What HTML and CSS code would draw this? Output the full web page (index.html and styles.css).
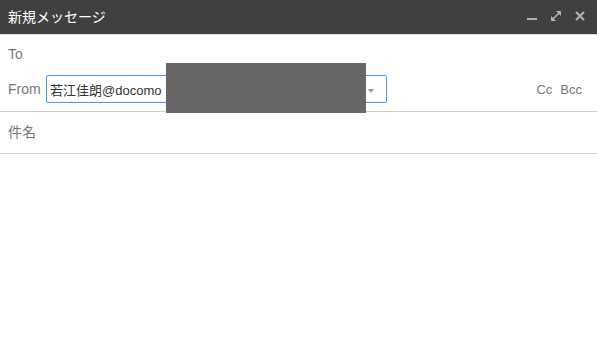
FILE: index.html
```html
<!DOCTYPE html>
<html lang="ja">
<head>
    <meta charset="UTF-8">
    <title>新規メッセージ</title>
    <link rel="stylesheet" href="styles.css">
</head>
<body>
    <div class="compose">
        <header class="compose-header">
            <h1 class="compose-title">新規メッセージ</h1>
            <div class="window-btns">
                <svg class="icon" width="12" height="12" viewBox="0 0 12 12">
                    <rect x="1" y="8" width="10" height="2" fill="currentColor"/>
                </svg>
                <svg class="icon" width="12" height="12" viewBox="0 0 12 12">
                    <path d="M3 9L9 3" stroke="currentColor" stroke-width="1.6"/>
                    <path d="M6 1H11V6Z" fill="currentColor"/>
                    <path d="M1 6V11H6Z" fill="currentColor"/>
                </svg>
                <svg class="icon" width="12" height="12" viewBox="0 0 12 12">
                    <path d="M2 2L10 10M10 2L2 10" stroke="currentColor" stroke-width="2"/>
                </svg>
            </div>
        </header>

        <div class="recipients">
            <div class="to-row">To</div>
            <div class="from-row">
                <span class="field-label">From</span>
                <div class="from-select">
                    <span class="from-value">若江佳朗@docomo</span>
                    <span class="caret"></span>
                </div>
                <div class="cc-links">
                    <span>Cc</span>
                    <span>Bcc</span>
                </div>
            </div>
            <div class="redacted"></div>
        </div>

        <div class="subject-row">件名</div>
    </div>
</body>
</html>
```

FILE: styles.css
```css
body {
    margin: 0;
    font-family: 'Liberation Sans', 'Noto Sans CJK JP', sans-serif;
    background-color: #ffffff;
    color: #777777;
}

.compose {
    width: 597px;
    height: 342px;
    position: relative;
}

/* --- Header --- */
.compose-header {
    height: 34px;
    background-color: #404040;
    border-bottom: 1px solid #d6d6d6;
    display: flex;
    align-items: center;
    justify-content: space-between;
    padding: 0 11px 0 8px;
}
.compose-title {
    margin: 0;
    font-size: 14px;
    font-weight: 400;
    color: #ffffff;
    margin-top: -3px;
}
.window-btns {
    display: flex;
    gap: 12px;
    color: #b3b3b3;
    margin-top: -2px;
}

/* --- Recipients --- */
.recipients {
    position: relative;
    border-bottom: 1px solid #cfcfcf;
    padding: 0 15px 8px 8px;
}
.to-row {
    font-size: 14px;
    line-height: 20px;
    padding-top: 9px;
}
.from-row {
    display: flex;
    align-items: center;
    margin-top: 11px;
}
.field-label { font-size: 14px; width: 38px; }
.from-select {
    width: 324px;
    height: 26px;
    border: 1px solid #4d90fe;
    border-radius: 2px;
    display: flex;
    align-items: center;
    justify-content: space-between;
    padding: 0 12px 0 3px;
    margin-right: auto;
}
.from-value { font-size: 13px; color: #333333; }
.caret {
    width: 0;
    height: 0;
    border-left: 3px solid transparent;
    border-right: 3px solid transparent;
    border-top: 4px solid #999999;
    margin-top: 3px;
}
.cc-links {
    display: flex;
    gap: 8px;
    font-size: 13px;
}
.redacted {
    position: absolute;
    left: 166px;
    top: 28px;
    width: 200px;
    height: 50px;
    background-color: #666666;
}

/* --- Subject --- */
.subject-row {
    height: 41px;
    line-height: 41px;
    padding-left: 8px;
    font-size: 14px;
    border-bottom: 1px solid #cfcfcf;
}
```
